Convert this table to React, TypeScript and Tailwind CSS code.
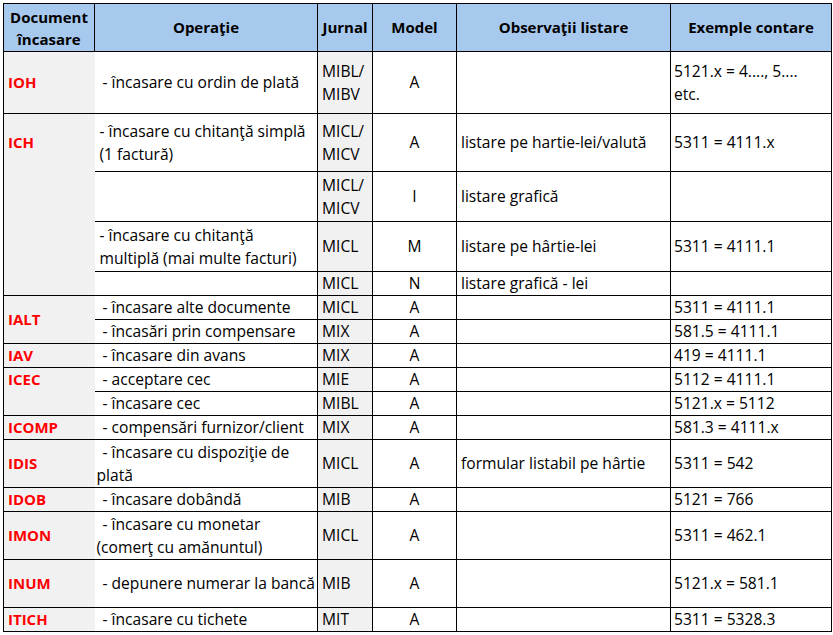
import React from 'react'

type Row = {
  h: number
  doc?: { text: string; rowSpan?: number } | null
  blank?: boolean // empty doc cell continuing a group
  op?: React.ReactNode
  indent?: boolean
  jur: React.ReactNode
  model: string
  obs?: string
  ex?: React.ReactNode
}

const rows: Row[] = [
  { h: 62, doc: { text: 'IOH' }, op: '- încasare cu ordin de plată', indent: true, jur: <>MIBL/<br />MIBV</>, model: 'A', ex: <>5121.x = 4...., 5....<br />etc.</> },
  { h: 58, doc: { text: 'ICH' }, op: <>- încasare cu chitanţă simplă<br />(1 factură)</>, jur: <>MICL/<br />MICV</>, model: 'A', obs: 'listare pe hartie-lei/valută', ex: '5311 = 4111.x' },
  { h: 50, blank: true, jur: <>MICL/<br />MICV</>, model: 'I', obs: 'listare grafică' },
  { h: 50, blank: true, op: <>- încasare cu chitanţă<br />multiplă (mai multe facturi)</>, jur: 'MICL', model: 'M', obs: 'listare pe hârtie-lei', ex: '5311 = 4111.1' },
  { h: 24, blank: true, jur: 'MICL', model: 'N', obs: 'listare grafică - lei' },
  { h: 24, doc: { text: 'IALT', rowSpan: 2 }, op: '- încasare alte documente', indent: true, jur: 'MICL', model: 'A', ex: '5311 = 4111.1' },
  { h: 24, doc: null, op: '- încasări prin compensare', indent: true, jur: 'MIX', model: 'A', ex: '581.5 = 4111.1' },
  { h: 24, doc: { text: 'IAV' }, op: '- încasare din avans', indent: true, jur: 'MIX', model: 'A', ex: '419 = 4111.1' },
  { h: 24, doc: { text: 'ICEC' }, op: '- acceptare cec', indent: true, jur: 'MIE', model: 'A', ex: '5112 = 4111.1' },
  { h: 24, blank: true, op: '- încasare cec', indent: true, jur: 'MIBL', model: 'A', ex: '5121.x = 5112' },
  { h: 24, doc: { text: 'ICOMP' }, op: '- compensări furnizor/client', indent: true, jur: 'MIX', model: 'A', ex: '581.3 = 4111.x' },
  { h: 48, doc: { text: 'IDIS' }, op: <>- încasare cu dispoziţie de<br /><span className="-ml-[3px]">plată</span></>, indent: true, jur: 'MICL', model: 'A', obs: 'formular listabil pe hârtie', ex: '5311 = 542' },
  { h: 24, doc: { text: 'IDOB' }, op: '- încasare dobândă', indent: true, jur: 'MIB', model: 'A', ex: '5121 = 766' },
  { h: 48, doc: { text: 'IMON' }, op: <>- încasare cu monetar<br /><span className="-ml-[3px]">(comerţ cu amănuntul)</span></>, indent: true, jur: 'MICL', model: 'A', ex: '5311 = 462.1' },
  { h: 48, doc: { text: 'INUM' }, op: '- depunere numerar la bancă', indent: true, jur: 'MIB', model: 'A', ex: '5121.x = 581.1' },
  { h: 24, doc: { text: 'ITICH' }, op: '- încasare cu tichete', indent: true, jur: 'MIT', model: 'A', ex: '5311 = 5328.3' },
]

const cell = 'border border-black align-middle whitespace-nowrap leading-[23px] p-0'

export default function App() {
  return (
    <div
      className="w-[833px] h-[635px] bg-white pl-[3px] pt-[3px] overflow-hidden"
      style={{ fontFamily: '"Open Sans", "Liberation Sans", sans-serif' }}
    >
      <table className="table-fixed border-collapse text-[15.6px] text-black w-[828px]">
        <colgroup>
          <col className="w-[91px]" />
          <col className="w-[223px]" />
          <col className="w-[55px]" />
          <col className="w-[84px]" />
          <col className="w-[214px]" />
          <col className="w-[161px]" />
        </colgroup>
        <thead>
          <tr className="h-[48px] bg-[#a8c9ee] text-[15px]">
            <th className="border border-black p-0 text-center leading-[22px] font-bold">Document<br />încasare</th>
            <th className="border border-black p-0 text-center font-bold">Operaţie</th>
            <th className="border border-black p-0 text-center font-bold">Jurnal</th>
            <th className="border border-black p-0 text-center font-bold">Model</th>
            <th className="border border-black p-0 text-center font-bold">Observaţii listare</th>
            <th className="border border-black p-0 text-center font-bold">Exemple contare</th>
          </tr>
        </thead>
        <tbody>
          {rows.map((r, i) => (
            <tr key={i} style={{ height: r.h }}>
              {r.doc && (
                <td
                  rowSpan={r.doc.rowSpan}
                  className={`border-l border-t border-black bg-[#f2f1f2] p-0 pl-[4px] align-middle text-[15px] font-bold text-[#ff0000] whitespace-nowrap leading-[23px] ${i === rows.length - 1 ? 'border-b' : ''}`}
                >
                  {r.doc.text}
                </td>
              )}
              {r.blank && <td className="border-l border-black bg-[#f2f1f2] p-0" />}
              <td
                className={`border-t border-b border-r border-black align-middle whitespace-nowrap leading-[23px] p-0 pl-[5px] ${r.indent ? 'indent-[3px]' : ''}`}
              >
                {r.op}
              </td>
              <td className={`${cell} bg-[#f2f1f2] pl-[4px]`}>{r.jur}</td>
              <td className={`${cell} text-center`}>{r.model}</td>
              <td className={`${cell} pl-[4px]`}>{r.obs}</td>
              <td className={`${cell} pl-[3px]`}>{r.ex}</td>
            </tr>
          ))}
        </tbody>
      </table>
    </div>
  )
}
